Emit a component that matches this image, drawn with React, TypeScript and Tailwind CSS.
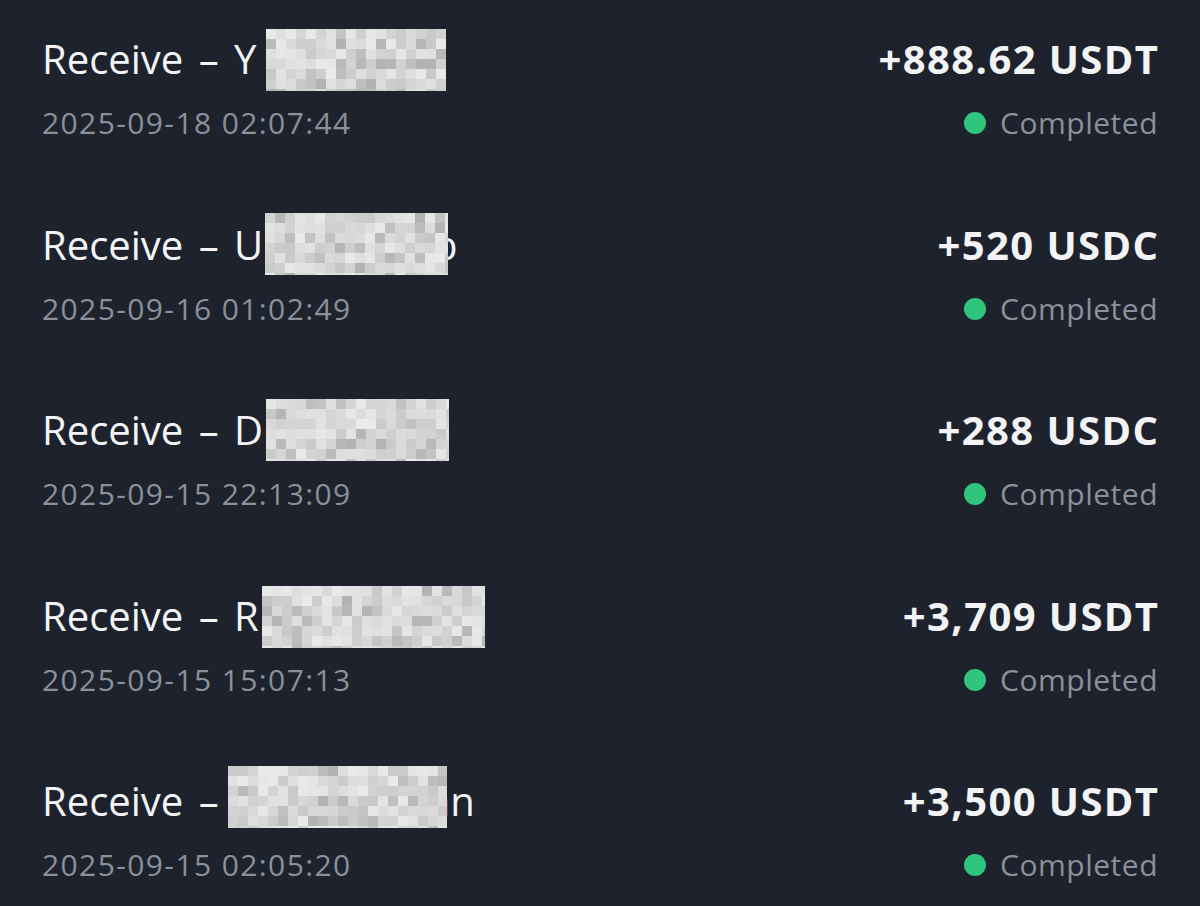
import React from "react";

type Tx = {
  lead: string;
  tail?: string;
  tailLeft?: number;
  date: string;
  amount: string;
  mask: { left: number; top: number; width: number; height: number; seed: number };
};

const rows: Tx[] = [
  { lead: "Receive – Y", date: "2025-09-18 02:07:44", amount: "+888.62 USDT", mask: { left: 266, top: 29, width: 180, height: 62, seed: 3 } },
  { lead: "Receive – U", tail: "b", tailLeft: 433, date: "2025-09-16 01:02:49", amount: "+520 USDC", mask: { left: 265, top: 27, width: 183, height: 62, seed: 11 } },
  { lead: "Receive – D", date: "2025-09-15 22:13:09", amount: "+288 USDC", mask: { left: 266, top: 28, width: 183, height: 62, seed: 23 } },
  { lead: "Receive – R", date: "2025-09-15 15:07:13", amount: "+3,709 USDT", mask: { left: 262, top: 29, width: 223, height: 62, seed: 37 } },
  { lead: "Receive –", tail: "an", tailLeft: 428, date: "2025-09-15 02:05:20", amount: "+3,500 USDT", mask: { left: 228, top: 24, width: 219, height: 62, seed: 51 } },
];

// pixelated blur over the sender name
function Mosaic({ width, height, seed }: { width: number; height: number; seed: number }) {
  const size = 10;
  const cols = Math.ceil(width / size);
  const rowsN = Math.ceil(height / size);
  let s = seed * 9301 + 49297;
  const rand = () => {
    s = (s * 9301 + 49297) % 233280;
    return s / 233280;
  };
  const cells = [];
  for (let i = 0; i < cols * rowsN; i++) {
    const r = rand();
    const v = Math.round(r < 0.15 ? 178 + rand() * 20 : 200 + rand() * 34);
    cells.push(<div key={i} style={{ background: `rgb(${v},${v},${v})` }} />);
  }
  return (
    <div
      className="grid overflow-hidden"
      style={{ width, height, gridTemplateColumns: `repeat(${cols}, ${size}px)`, gridAutoRows: `${size}px` }}
    >
      {cells}
    </div>
  );
}

export default function App() {
  return (
    <div className="w-[1200px] h-[906px] overflow-hidden bg-[#1e222c] font-['Open_Sans',sans-serif]">
      {rows.map((t, i) => (
        <div key={i} className="relative h-[185.5px] flex justify-between pl-[42px] pr-[42px] pt-[33px]">
          <div className="flex flex-col">
            <div className="text-[40px] leading-[52px] text-[#f2f3f5] whitespace-nowrap [word-spacing:5px]">{t.lead}</div>
            <div className="mt-[20px] text-[30px] leading-[36px] text-[#8b909a] tracking-[1.4px]">{t.date}</div>
          </div>
          <div className="flex flex-col items-end">
            <div className="text-[40px] leading-[52px] font-bold text-[#f2f3f5] tracking-[1.4px] mr-[-1.4px]">{t.amount}</div>
            <div className="mt-[20px] flex items-center gap-[14px] text-[30px] leading-[36px] text-[#8b909a] tracking-[0.5px]">
              <span className="w-[22px] h-[22px] rounded-full bg-[#2fc57d]" />
              Completed
            </div>
          </div>
          {t.tail && (
            <span
              className="absolute top-[33px] text-[40px] leading-[52px] text-[#f2f3f5]"
              style={{ left: t.tailLeft }}
            >
              {t.tail}
            </span>
          )}
          <div className="absolute" style={{ left: t.mask.left, top: t.mask.top }}>
            <Mosaic width={t.mask.width} height={t.mask.height} seed={t.mask.seed} />
          </div>
        </div>
      ))}
    </div>
  );
}
